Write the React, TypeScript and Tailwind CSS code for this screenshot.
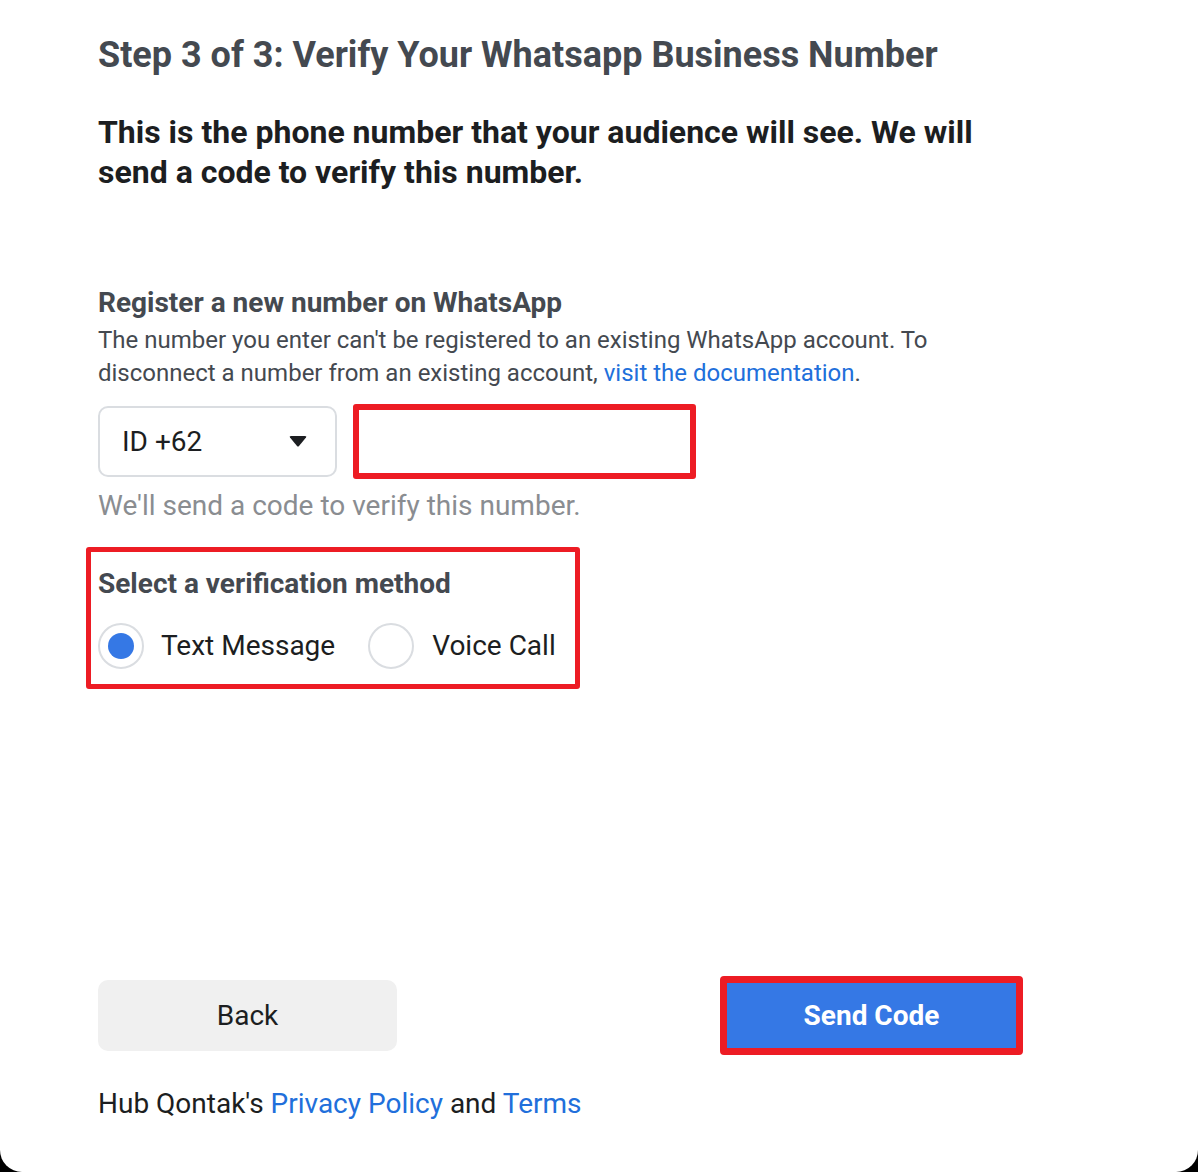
export default function App() {
  return (
    <div className="min-h-[1172px] bg-black font-['Roboto',sans-serif]">
      <div className="h-[1172px] rounded-b-[22px] bg-white pl-[98px] pt-[35px]">
        <h1 className="text-[36px] font-bold leading-[40px] text-[#444950]">
          Step 3 of 3: Verify Your Whatsapp Business Number
        </h1>
        <p className="mt-[37px] w-[900px] text-[32px] font-bold leading-[40px] text-[#1c1e21]">
          This is the phone number that your audience will see. We will send a code to verify this number.
        </p>

        <h2 className="mt-[93px] text-[28px] font-bold leading-[36px] text-[#444950]">
          Register a new number on WhatsApp
        </h2>
        <p className="w-[860px] pt-[3px] text-[24px] leading-[33px] text-[#444950]">
          The number you enter can't be registered to an existing WhatsApp account. To disconnect a number from an
          existing account, <span className="text-[#216fdb]">visit the documentation</span>.
        </p>

        <div className="mt-[14px] flex items-center gap-[16px]">
          <div className="flex h-[71px] w-[239px] items-center justify-between rounded-[10px] border-2 border-[#dadde1] pl-[22px] pr-[28px]">
            <span className="text-[28px] text-[#1c1e21]">ID +62</span>
            <svg width="18" height="11" viewBox="0 0 18 11">
              <path d="M1 1.5 Q0 0 2 0 H16 Q18 0 17 1.5 L10 10 Q9 11 8 10 Z" fill="#1c1e21" />
            </svg>
          </div>
          <div className="h-[75px] w-[343px] rounded-[3px] border-[6px] border-[#ed1c24]" />
        </div>

        <p className="mt-[10px] text-[28px] leading-[33px] text-[#8a8d91]">We'll send a code to verify this number.</p>

        <div className="-ml-[12px] mt-[25px] w-fit rounded-[3px] border-[5px] border-[#ed1c24] pb-[15px] pl-[7px] pr-[19px] pt-[14px]">
          <h3 className="text-[28px] font-bold leading-[36px] text-[#444950]">Select a verification method</h3>
          <div className="mt-[21px] flex items-center">
            <span className="flex h-[46px] w-[46px] items-center justify-center rounded-full border-2 border-[#dadde1]">
              <span className="h-[26px] w-[26px] rounded-full bg-[#3578e5]" />
            </span>
            <span className="ml-[17px] text-[28px] text-[#1c1e21]">Text Message</span>
            <span className="ml-[33px] h-[46px] w-[46px] rounded-full border-2 border-[#dadde1]" />
            <span className="ml-[18px] text-[28px] text-[#1c1e21]">Voice Call</span>
          </div>
        </div>

        <div className="mt-[287px] flex w-[925px] items-center justify-between">
          <button className="h-[71px] w-[299px] rounded-[10px] bg-[#f0f0f0] text-[28px] text-[#1c1e21]">Back</button>
          <div className="rounded-[4px] border-[7px] border-[#ed1c24]">
            <button className="h-[65px] w-[289px] bg-[#3578e5] text-[28px] font-bold text-white">Send Code</button>
          </div>
        </div>

        <p className="mt-[32px] text-[28px] leading-[33px] text-[#1c1e21]">
          Hub Qontak's <span className="text-[#216fdb]">Privacy Policy</span> and{" "}
          <span className="text-[#216fdb]">Terms</span>
        </p>
      </div>
    </div>
  );
}
